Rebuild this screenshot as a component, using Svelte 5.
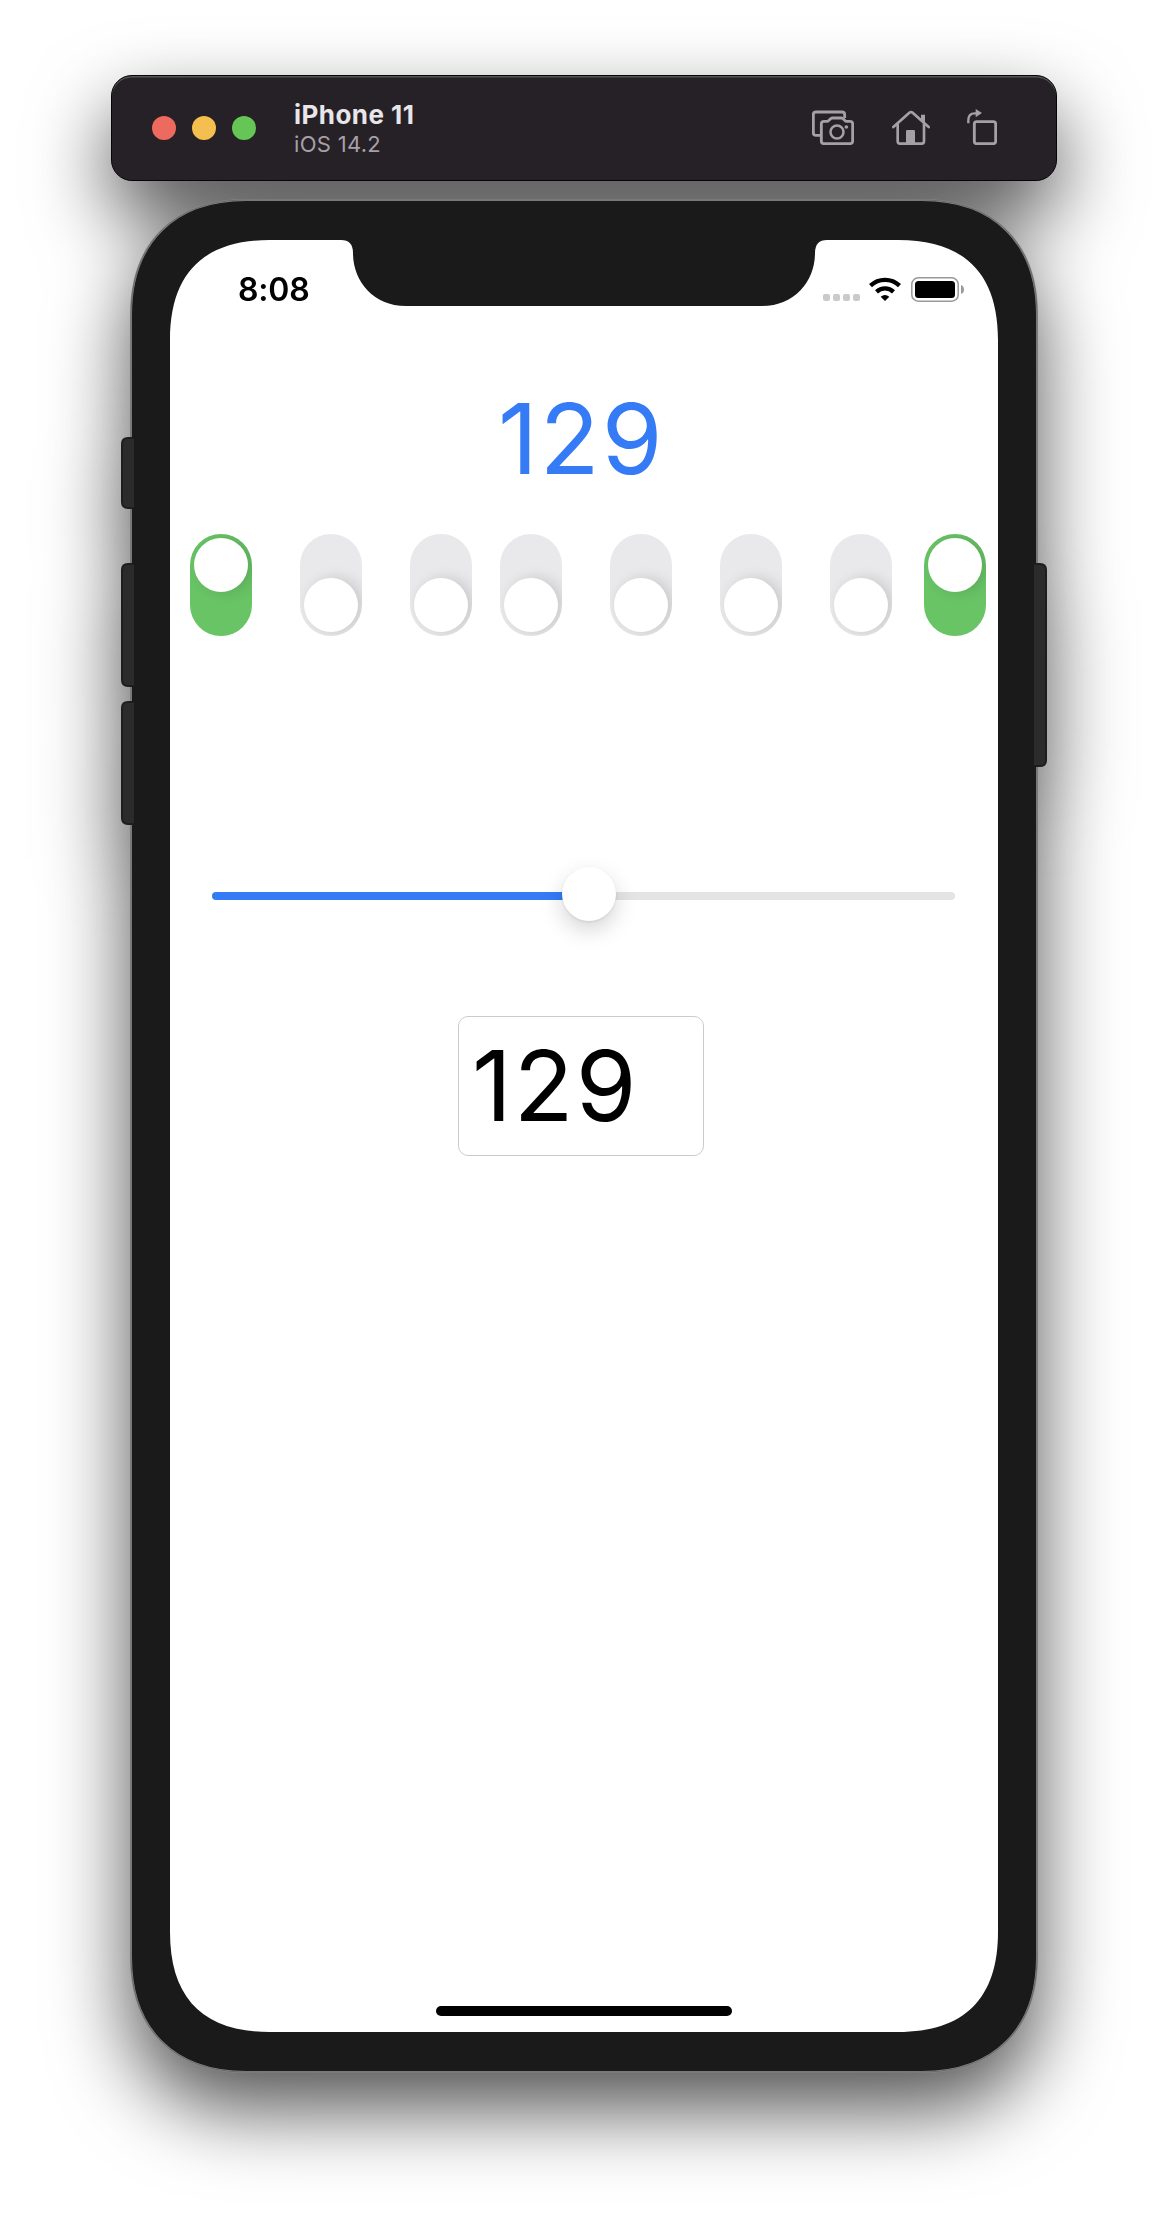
<script>
  let value = $state(129);

  // Bit groups, most significant bit first
  const groups = [[7, 6, 5], [4, 3, 2, 1], [0]];
  const isOn = (bit) => ((value >> bit) & 1) === 1;
  const toggle = (bit) => (value = value ^ (1 << bit));

  const caseOutline =
    "M131 315C131 243 174 200 246 200H922C994 200 1037 243 1037 315V1957C1037 2029 994 2072 922 2072H246C174 2072 131 2029 131 1957Z";
</script>

<div class="stage">
  <header class="titlebar">
    <div class="lights">
      <span class="light red"></span>
      <span class="light yellow"></span>
      <span class="light green"></span>
    </div>
    <div class="titles">
      <div class="name">iPhone 11</div>
      <div class="os">iOS 14.2</div>
    </div>
    <div class="tools">
      <svg width="42" height="36" viewBox="96 147 126 108" fill="none" stroke="#a69fa7" stroke-width="8.5" stroke-linejoin="round">
        <path d="M122 226H108Q100 226 100 218V164Q100 156 108 156H186Q194 156 194 164V174" />
        <path d="M132 184H142Q145 184 147 181L151 177Q153 174 157 174H184Q188 174 190 177L194 181Q196 184 199 184H210Q218 184 218 192V243Q218 251 210 251H132Q124 251 124 243V192Q124 184 132 184Z" />
        <circle cx="171" cy="216" r="19.5" stroke-width="7.5" />
        <circle cx="199" cy="201" r="5.5" fill="#a69fa7" stroke="none" />
      </svg>
      <svg width="38" height="36" viewBox="336 147 114 108" fill="none" stroke="#a69fa7" stroke-width="8" stroke-linecap="round" stroke-linejoin="round">
        <path d="M340 201L388 158.500Q393 154 398 158.500L446 201" />
        <path d="M353 192V244Q353 251 360 251H425Q432 251 432 244V192" />
        <path d="M423 164H435V192L423 181Z" fill="#a69fa7" stroke="none" />
        <path d="M378 251V214Q378 210 382 210H401Q405 210 405 214V251Z" fill="#a69fa7" stroke="none" />
      </svg>
      <svg width="30" height="36" viewBox="561 147 90 108" fill="none" stroke="#a69fa7" stroke-width="8.500">
        <rect x="583" y="185" width="64" height="66" rx="7" />
        <path d="M565 190V181Q565 160 584 160H589" stroke-width="7" />
        <path d="M587 147L606 159L587 172Z" fill="#a69fa7" stroke="none" />
      </svg>
    </div>
  </header>

  <main class="phone">
    <svg class="shell" width="926" height="1872" viewBox="121 200 926 1872">
      <path d={caseOutline} fill="#1a1a1a" stroke="#8a8a8a" stroke-width="2" />
      <path d={caseOutline} fill="none" stroke="#606060" stroke-width="0.800" />
      <path
        d="M170 340C170 273.500 203.500 240 270 240H341Q353 240 353 253C353 281 373 306 406 306H762C795 306 815 281 815 253Q815 240 827 240H898C964.500 240 998 273.500 998 340V1932C998 1998.500 964.500 2032 898 2032H270C203.500 2032 170 1998.500 170 1932Z"
        fill="#fff" />
      <g fill="#2b2b2b" stroke="#1e1e1e" stroke-width="2">
        <path d="M134 438H128Q122 438 122 444V502Q122 508 128 508H134" />
        <path d="M134 564H128Q122 564 122 570V680Q122 686 128 686H134" />
        <path d="M134 702H128Q122 702 122 708V818Q122 824 128 824H134" />
        <path d="M1034 564H1040Q1046 564 1046 570V760Q1046 766 1040 766H1034" />
      </g>
    </svg>

    <section class="screen">
      <div class="status">
        <span class="time">8:08</span>
        <div class="indicators">
          <div class="signal"><i></i><i></i><i></i><i></i></div>
          <svg class="wifi" width="32" height="24" viewBox="268 650 96 72" fill="none" stroke="#000" stroke-width="13">
            <path d="M272.500 676A63 63 0 0 1 359.500 676" />
            <path d="M290.500 694.500A37 37 0 0 1 341.500 694.500" />
            <path d="M316 722L303 709Q316 699 329 709Z" fill="#000" stroke="none" />
          </svg>
          <svg class="battery" width="53" height="25" viewBox="0 0 53 25">
            <rect x="0.800" y="0.800" width="46.400" height="23.400" rx="6.500" fill="none" stroke="#999" stroke-width="1.500" />
            <rect x="4" y="4" width="40" height="17" rx="3.500" />
            <path d="M50 8Q53 9 53 12.500Q53 16 50 17Z" fill="#999" />
          </svg>
        </div>
      </div>

      <div class="readout">{value}</div>

      <div class="bits">
        {#each groups as group}
          <div class="group">
            {#each group as bit}
              <button class="switch" class:on={isOn(bit)} aria-label={`Bit ${bit}`} onclick={() => toggle(bit)}>
                <span class="knob"></span>
              </button>
            {/each}
          </div>
        {/each}
      </div>

      <div class="slider">
        <div class="fill" style:width={`${(27 + (value / 255) * 689 + 1.5) / 7.43}%`}></div>
        <div class="thumb"></div>
        <div class="rest"></div>
      </div>

      <div class="field">{value}</div>
      <div class="home"></div>
    </section>
  </main>
</div>

<style>
  :global(body) {
    margin: 0;
    background: #fff;
  }
  .stage {
    box-sizing: border-box;
    width: 1168px;
    height: 2220px;
    padding-top: 75px;
    overflow: hidden;
    font-family: Inter, "Liberation Sans", sans-serif;
    filter: drop-shadow(0 36px 40px rgba(0, 0, 0, 0.68));
  }
  .titlebar {
    box-sizing: border-box;
    display: flex;
    align-items: center;
    width: 946px;
    height: 106px;
    margin-left: 111px;
    padding: 0 59px 0 40px;
    border: 1px solid #050505;
    border-radius: 21px;
    background: #262127;
    box-shadow: inset 0 1.5px 0 #555;
  }
  .lights {
    display: flex;
    gap: 16px;
  }
  .light {
    width: 24px;
    height: 24px;
    border-radius: 50%;
  }
  .red { background: #ec6a5e; }
  .yellow { background: #f4bf4f; }
  .green { background: #65c656; }
  .titles {
    margin-left: 38px;
    white-space: nowrap;
  }
  .name {
    font-size: 26px;
    font-weight: 700;
    line-height: 31px;
    letter-spacing: 0.45px;
    color: #e8e6e8;
  }
  .os {
    margin-top: 1px;
    font-size: 22px;
    line-height: 27px;
    letter-spacing: 0.3px;
    color: #a69fa7;
  }
  .tools {
    display: flex;
    gap: 37.5px;
    margin: -2px 0 0 auto;
  }
  .phone {
    position: relative;
    width: 926px;
    height: 1872px;
    margin: 19px 0 0 121px;
  }
  .shell {
    position: absolute;
    inset: 0;
    overflow: visible;
  }
  .screen {
    position: relative;
    display: flex;
    flex-direction: column;
    box-sizing: border-box;
    width: 926px;
    height: 1832px;
    padding: 40px 49px 0;
  }
  .status {
    display: flex;
    justify-content: space-between;
    height: 88px;
    padding: 0 34px 0 68px;
  }
  .time {
    margin-top: 30px;
    font-size: 32px;
    font-weight: 560;
    line-height: 40px;
    letter-spacing: -0.2px;
  }
  .indicators {
    display: flex;
    align-items: flex-start;
    margin-top: 37px;
  }
  .signal {
    display: flex;
    gap: 3px;
    margin: 17px 9px 0 0;
  }
  .signal i {
    width: 7px;
    height: 7px;
    border-radius: 2px;
    background: #cacaca;
  }
  .wifi {
    margin-right: 10px;
  }
  .readout {
    width: 180px;
    height: 120px;
    margin: 51px 0 0 328px;
    font-size: 98px;
    line-height: 120px;
    letter-spacing: 2px;
    color: #357bf6;
  }
  .bits {
    display: flex;
    margin: 35px 0 0 20px;
  }
  .group {
    display: flex;
    gap: 48px;
  }
  .group:nth-child(2) { margin: 0 32px 0 28px; }
  .switch {
    display: flex;
    align-items: flex-end;
    width: 62px;
    height: 102px;
    padding: 4px;
    border: 0;
    border-radius: 31px;
    background: #e9e9eb;
    overflow: hidden;
  }
  .switch.on {
    align-items: flex-start;
    background: #69c466;
  }
  .knob {
    width: 54px;
    height: 54px;
    border-radius: 50%;
    background: #fff;
    box-shadow: 5px 0 14px rgba(0, 0, 0, 0.14);
  }
  .slider {
    display: flex;
    align-items: center;
    width: 743px;
    height: 54px;
    margin: 231px 0 0 42px;
  }
  .fill,
  .rest {
    height: 8px;
    margin-top: 4px;
  }
  .fill {
    flex: none;
    border-radius: 4px 0 0 4px;
    background: #357bf6;
  }
  .rest {
    flex: 1;
    margin-left: -27px;
    border-radius: 0 4px 4px 0;
    background: #e4e4e6;
  }
  .thumb {
    position: relative;
    flex: none;
    width: 54px;
    height: 54px;
    margin-left: -27px;
    border-radius: 50%;
    background: #fff;
    box-shadow: 0 9px 22px rgba(0, 0, 0, 0.17), 0 1px 3px rgba(0, 0, 0, 0.1);
  }
  .field {
    box-sizing: border-box;
    width: 246px;
    height: 140px;
    margin: 95px 0 0 288px;
    padding: 8px 13px;
    border: 1px solid #cbcbcb;
    border-radius: 10px;
    font-size: 98px;
    line-height: 122px;
    letter-spacing: 2px;
    color: #000;
  }
  .home {
    width: 296px;
    height: 10px;
    margin: auto 0 16px 266px;
    border-radius: 5px;
    background: #000;
  }
</style>
